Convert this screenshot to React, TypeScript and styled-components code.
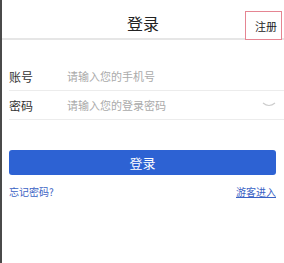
import React from "react";
import styled, { createGlobalStyle } from "styled-components";

const Global = createGlobalStyle`
  html, body { margin: 0; padding: 0; background: #fff; }
  body { font-family: "Noto Sans CJK SC", "Liberation Sans", sans-serif; }
`;

const Page = styled.div`
  width: 284px;
  height: 263px;
  box-sizing: border-box;
  border-left: 2px solid #4a4a4a;
  background: #fff;
  display: flex;
  flex-direction: column;
`;

const Header = styled.div`
  position: relative;
  height: 38px;
  border-bottom: 2px solid #e6e6e6;
  display: flex;
  align-items: center;
  justify-content: center;
`;

const Title = styled.div`
  font-size: 16px;
  color: #222;
  margin-top: 8px;
`;

const RegisterBox = styled.div`
  position: absolute;
  right: 2px;
  top: 11px;
  width: 37px;
  height: 29px;
  box-sizing: border-box;
  border: 1px solid #e58592;
  display: flex;
  align-items: center;
  justify-content: center;
  font-size: 11px;
  color: #222;
  padding-left: 5px;
  background: #fff;
`;

const Form = styled.div`
  margin-top: 22px;
  padding-left: 7px;
  display: flex;
  flex-direction: column;
`;

const Row = styled.div`
  height: 28px;
  border-bottom: 1px solid #ececec;
  display: flex;
  align-items: center;
  padding-right: 8px;
`;

const Label = styled.div`
  width: 58px;
  font-size: 12px;
  color: #333;
`;

const Placeholder = styled.div`
  flex: 1;
  font-size: 11px;
  color: #aaa;
`;

const Button = styled.div`
  margin: 30px 8px 0 7px;
  height: 25px;
  border-radius: 3px;
  background: #2d62d3;
  color: #fff;
  font-size: 13px;
  display: flex;
  align-items: center;
  justify-content: center;
`;

const Links = styled.div`
  margin: 9px 8px 0 7px;
  display: flex;
  justify-content: space-between;
  font-size: 10px;
  color: #3a62c4;
`;

const Under = styled.span`
  text-decoration: underline;
`;

export default function App() {
  return (
    <>
      <Global />
      <Page>
        <Header>
          <Title>登录</Title>
          <RegisterBox>注册</RegisterBox>
        </Header>
        <Form>
          <Row>
            <Label>账号</Label>
            <Placeholder>请输入您的手机号</Placeholder>
          </Row>
          <Row>
            <Label>密码</Label>
            <Placeholder>请输入您的登录密码</Placeholder>
            <svg width="14" height="6" viewBox="0 0 14 6">
              <path d="M1 1 Q7 6 13 1" fill="none" stroke="#ccc" strokeWidth="1.2" />
            </svg>
          </Row>
        </Form>
        <Button>登录</Button>
        <Links>
          <span>忘记密码?</span>
          <Under>游客进入</Under>
        </Links>
      </Page>
    </>
  );
}
